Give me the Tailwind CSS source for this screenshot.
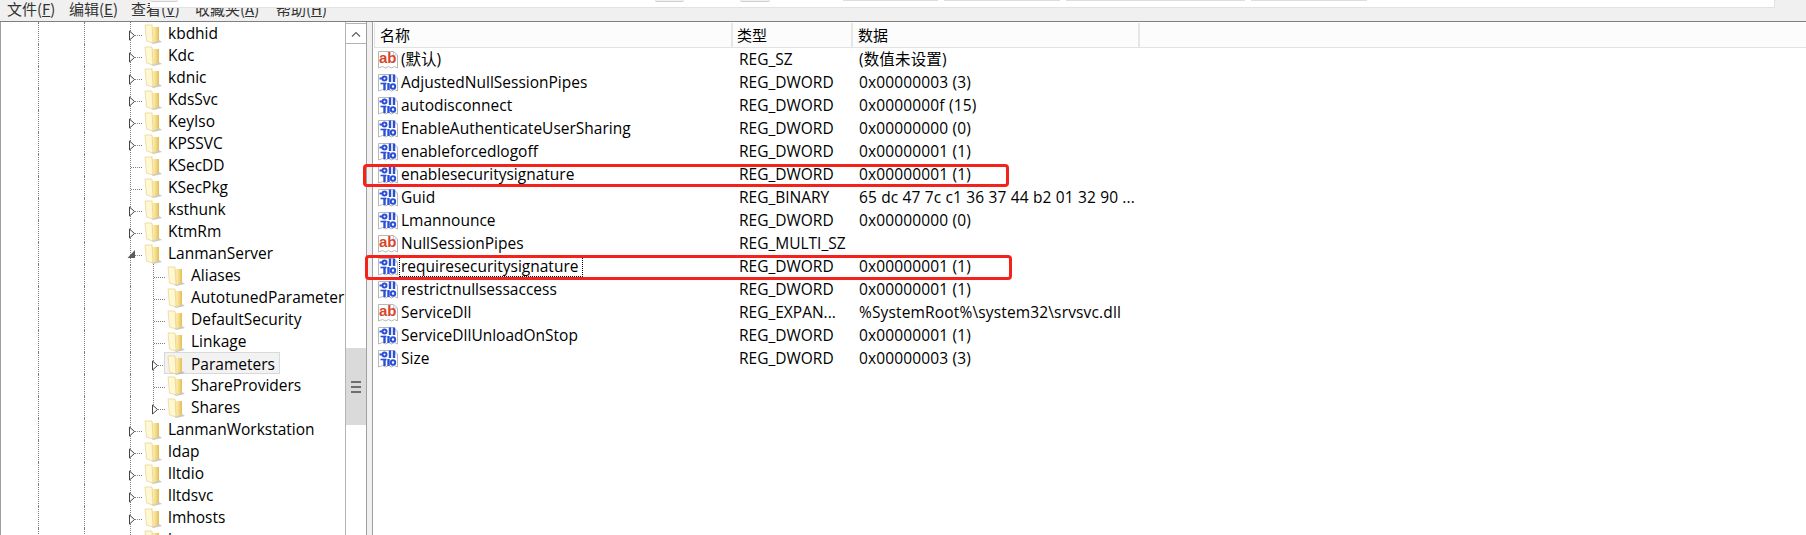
<!DOCTYPE html>
<html lang="zh-CN">
  <head>
    <meta charset="UTF-8" />
    <title>注册表编辑器</title>
    <script src="https://cdn.jsdelivr.net/npm/@tailwindcss/browser@4"></script>
  </head>
  <body class="relative w-[1806px] h-[535px] overflow-hidden bg-[#f0f0f0] text-black font-['Open_Sans','Noto_Sans_CJK_SC',sans-serif] text-[15.5px]">
    <!-- shared icons -->
    <svg class="absolute w-0 h-0">
      <defs>
        <linearGradient id="folderFill" x1="0" y1="0" x2="1" y2="0">
          <stop offset="0" stop-color="#fdf3bd" />
          <stop offset="0.5" stop-color="#f8e297" />
          <stop offset="1" stop-color="#e4bd55" />
        </linearGradient>
      </defs>
      <symbol id="folder" viewBox="0 0 18 20">
        <path d="M6 17l9-1 3 2-9 2z" fill="#a8a396" opacity="0.6" />
        <path d="M7 1l2 2h6v13l-6 3z" fill="url(#folderFill)" />
        <path d="M1 1h7l1 18-6.5-2z" fill="#fff8d2" stroke="#e3c97e" stroke-width="0.6" />
      </symbol>
      <symbol id="page" viewBox="0 0 20 20">
        <path d="M0.5 1.5h15l4 3.5v13l-3-1.5-3 1.5-3-1.5-3 1.5-3-1.5-4 1.5z" fill="#fff" stroke="#b8b8b8" />
        <path d="M15.5 1.5v3.5h4" fill="none" stroke="#cfcfcf" />
      </symbol>
      <symbol id="bin" viewBox="0 0 20 20">
        <use href="#page" />
        <g fill="none" stroke="#2b50d8">
          <circle cx="6.5" cy="5.5" r="2" stroke-width="2" />
          <path d="M1.5 5.5h3" stroke-width="2" />
          <path d="M12 1.5v7.5M16 1.5v7.5M6.5 10v7M10.5 10v7" stroke-width="2.4" />
          <circle cx="15" cy="13.5" r="2.2" stroke-width="2" />
          <path d="M2.5 10.5h6" stroke-width="1.6" />
        </g>
      </symbol>
      <symbol id="str" viewBox="0 0 20 20">
        <use href="#page" />
        <text x="1" y="12.5" font-family="'Liberation Sans', sans-serif" font-weight="700" font-size="15" fill="#d6472a">ab</text>
      </symbol>
    </svg>

    <!-- menu bar, its top is cut off by the crop -->
    <div class="h-[21px] flex pl-[7px] text-[15px] leading-[18px] text-[#333] whitespace-nowrap font-['Noto_Sans_CJK_SC','Open_Sans',sans-serif]">
      <span class="w-[62px]">文件(<u>F</u>)</span>
      <span class="w-[62px]">编辑(<u>E</u>)</span>
      <span class="w-[64px]">查看(<u>V</u>)</span>
      <span class="w-[81px]">收藏夹(<u>A</u>)</span>
      <span>帮助(<u>H</u>)</span>
    </div>

    <!-- browser toolbar lying over the menu bar -->
    <div class="absolute left-[150px] top-0 w-[1625px] h-[8px] flex items-start bg-white border-b border-r border-[#e2e2e2]">
      <div class="w-[28px] h-[2px] bg-[#f0f0f0] border-b border-[#cfcfcf] rounded-b-sm"></div>
      <div class="ml-[477px] w-[29px] h-[2px] bg-[#f0f0f0] border-b border-[#cfcfcf] rounded-b-sm"></div>
      <div class="ml-[56px] w-[30px] h-[2px] bg-[#f0f0f0] border-b border-[#cfcfcf] rounded-b-sm"></div>
      <div class="ml-[73px] w-[95px] h-[1px] bg-[#dedede]"></div>
      <div class="ml-[6px] w-[116px] h-[1px] bg-[#dedede]"></div>
      <div class="ml-[6px] w-[179px] h-[1px] bg-[#dedede]"></div>
      <div class="ml-[6px] w-[116px] h-[1px] bg-[#dedede]"></div>
    </div>

    <div class="flex h-[514px] border-t border-[#808080]">
      <!-- key tree -->
      <div class="w-[367px] h-full flex bg-white border-x border-[#a0a0a0]">
        <div id="tree" class="w-[344px] overflow-hidden"></div>
        <div class="w-[21px] flex flex-col border-l border-[#b4b4b4]">
          <div class="h-[21px] mt-[1px] flex items-center justify-center border-y border-[#b4b4b4]">
            <svg class="w-[10px] h-[6px]" viewBox="0 0 10 6"><path d="M1 5.5l4-4 4 4" fill="none" stroke="#606060" stroke-width="1.2" /></svg>
          </div>
          <div class="h-[304px]"></div>
          <div class="h-[77px] flex flex-col items-center justify-center gap-[3px] bg-[#dadada]">
            <div class="w-[10px] h-[2px] bg-[#6e6e6e]"></div>
            <div class="w-[10px] h-[2px] bg-[#6e6e6e]"></div>
            <div class="w-[10px] h-[2px] bg-[#6e6e6e]"></div>
          </div>
        </div>
      </div>
      <div class="w-[5px]"></div>
      <!-- values list -->
      <div class="relative flex-1 h-full bg-white border-l border-[#a0a0a0]">
        <div class="flex h-[25px] mt-[1px] ml-[1px] bg-[#fcfcfc] border-l border-b border-[#e2e2e2] leading-[24px] text-[15px] font-['Noto_Sans_CJK_SC','Open_Sans',sans-serif]">
          <div class="w-[358px] pl-[5px] border-r-2 border-[#e6e6e6]">名称</div>
          <div class="w-[120px] pl-[4px] border-r-2 border-[#e6e6e6]">类型</div>
          <div class="w-[287px] pl-[5px] border-r-2 border-[#e6e6e6]">数据</div>
        </div>
        <div id="list"></div>

        <!-- red annotation boxes -->
        <div class="absolute left-[-10px] top-[142px] w-[646px] h-[23px] border-[3px] border-[#f5221b] rounded-[4px]"></div>
        <div class="absolute left-[-8px] top-[233px] w-[647px] h-[25px] border-[3px] border-[#f5221b] rounded-[4px]"></div>
      </div>
    </div>

    <script>
      // [name, depth, state]  state: c = collapsed, o = open, l = leaf
      const keys = [
        ["kbdhid", 1, "c"], ["Kdc", 1, "c"], ["kdnic", 1, "c"], ["KdsSvc", 1, "c"],
        ["KeyIso", 1, "c"], ["KPSSVC", 1, "c"], ["KSecDD", 1, "l"], ["KSecPkg", 1, "l"],
        ["ksthunk", 1, "c"], ["KtmRm", 1, "c"], ["LanmanServer", 1, "o"],
        ["Aliases", 2, "l"], ["AutotunedParameters", 2, "l"], ["DefaultSecurity", 2, "l"],
        ["Linkage", 2, "l"], ["Parameters", 2, "c"], ["ShareProviders", 2, "l"], ["Shares", 2, "c"],
        ["LanmanWorkstation", 1, "c"], ["ldap", 1, "c"], ["lltdio", 1, "c"], ["lltdsvc", 1, "c"],
        ["lmhosts", 1, "c"], ["lmsvc", 1, "c"],
      ];

      const values = [
        ["str", "(默认)", "REG_SZ", "(数值未设置)"],
        ["bin", "AdjustedNullSessionPipes", "REG_DWORD", "0x00000003 (3)"],
        ["bin", "autodisconnect", "REG_DWORD", "0x0000000f (15)"],
        ["bin", "EnableAuthenticateUserSharing", "REG_DWORD", "0x00000000 (0)"],
        ["bin", "enableforcedlogoff", "REG_DWORD", "0x00000001 (1)"],
        ["bin", "enablesecuritysignature", "REG_DWORD", "0x00000001 (1)"],
        ["bin", "Guid", "REG_BINARY", "65 dc 47 7c c1 36 37 44 b2 01 32 90 ..."],
        ["bin", "Lmannounce", "REG_DWORD", "0x00000000 (0)"],
        ["str", "NullSessionPipes", "REG_MULTI_SZ", ""],
        ["bin", "requiresecuritysignature", "REG_DWORD", "0x00000001 (1)"],
        ["bin", "restrictnullsessaccess", "REG_DWORD", "0x00000001 (1)"],
        ["str", "ServiceDll", "REG_EXPAN...", "%SystemRoot%\\system32\\srvsvc.dll"],
        ["bin", "ServiceDllUnloadOnStop", "REG_DWORD", "0x00000001 (1)"],
        ["bin", "Size", "REG_DWORD", "0x00000003 (3)"],
      ];

      function nodeSvg(state, last) {
        const stem = last ? "M3.5 0v13" : "M3.5 0v22";
        let mark = "";
        if (state === "c") mark = '<path d="M2.5 9l5 4.5-5 4.5z" fill="#fff" stroke="#444" />';
        if (state === "o") mark = '<path d="M8 8v8H0.5z" fill="#5c5c5c" />';
        return `<svg class="w-[17px] h-[22px] shrink-0" viewBox="0 0 17 22">
          <path d="${stem}M4 13.5h11" fill="none" stroke="#808080" stroke-dasharray="1 1" />${mark}</svg>`;
      }

      const folder = '<svg class="w-[18px] h-[20px] mt-[2px] shrink-0"><use href="#folder" /></svg>';

      document.getElementById("tree").innerHTML = keys.map(([name, depth, state]) => {
        const selected = name === "Parameters";
        const label = `${folder}<span class="ml-[6px] leading-[22px]">${name}</span>`;
        return `<div class="flex h-[22px] pl-[37px] whitespace-nowrap">
          <div class="w-[46px] h-full shrink-0 border-l border-dotted border-[#808080]"></div>
          <div class="w-[43px] h-full shrink-0 border-l border-dotted border-[#808080]"></div>
          ${depth === 2 ? '<div class="w-[23px] h-full shrink-0"><div class="ml-[3px] h-full border-l border-dotted border-[#808080]"></div></div>' : ""}
          ${nodeSvg(state, name === "Shares")}
          ${selected
            ? `<div class="flex h-full -ml-[3px] pl-[2px] pr-[4px] bg-[#f2f2f2] border border-[#d9d9d9]">${label}</div>`
            : label}
        </div>`;
      }).join("");

      document.getElementById("list").innerHTML = values.map(([icon, name, type, data]) => {
        const focused = name === "requiresecuritysignature";
        return `<div class="flex h-[23px] pl-[5px] leading-[23px] whitespace-nowrap">
          <div class="w-[361px] flex">
            <svg class="w-[20px] h-[20px] mt-[2px] shrink-0"><use href="#${icon}" /></svg>
            <span class="${focused
              ? "ml-[1px] pl-[1px] w-[184px] h-[21px] mt-[1px] leading-[19px] border border-dotted border-black"
              : "ml-[1px] pl-[1px] border border-transparent h-[21px] mt-[1px] leading-[19px]"}">${name}</span>
          </div>
          <div class="w-[120px]">${type}</div>
          <div class="tracking-[0.15px]">${data}</div>
        </div>`;
      }).join("");
    </script>
  </body>
</html>
